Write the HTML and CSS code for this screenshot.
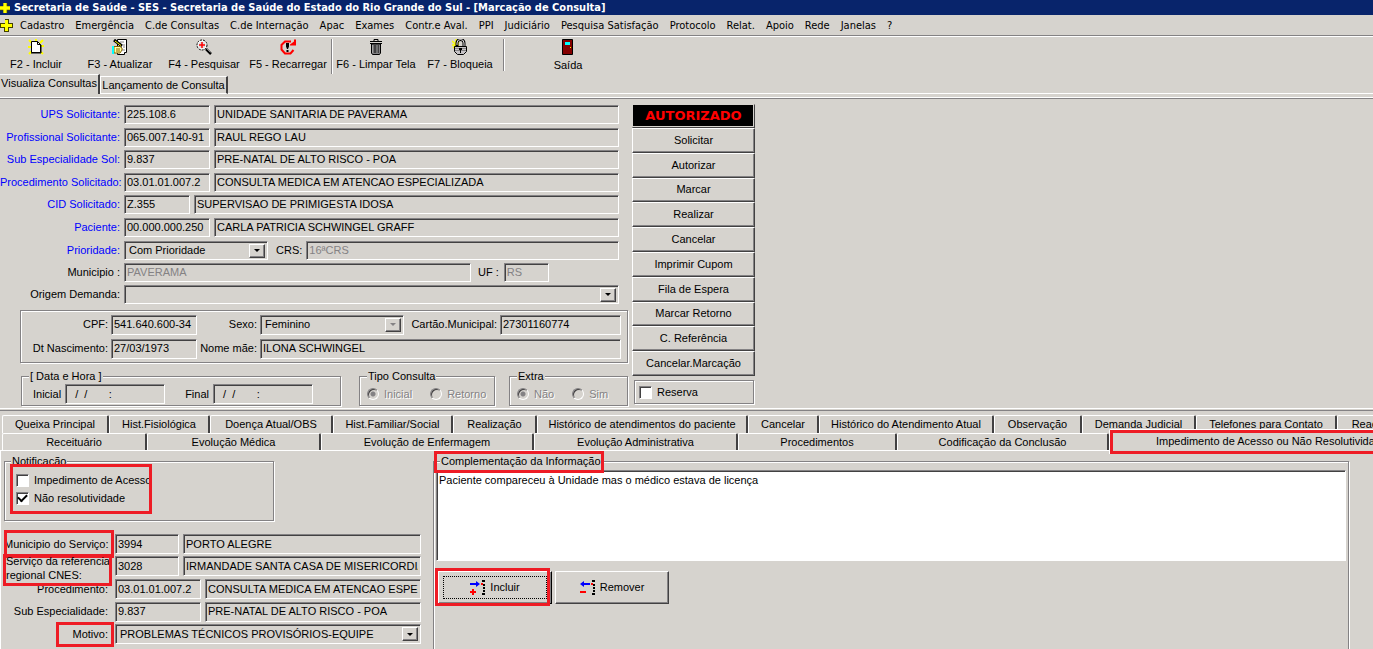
FILE: index.html
```html
<!DOCTYPE html>
<html lang="pt-BR">
<head>
<meta charset="utf-8">
<title>Secretaria de Saúde - SES - Marcação de Consulta</title>
<link rel="stylesheet" href="styles.css">
</head>
<body>
<header class="titlebar">
  <svg class="cross" viewBox="0 0 12 12"><path d="M4 0h5v4h3v5H9v3H4V9H0V4h4z" fill="#424100"/><path d="M4 0h4v4h4v4H8v4H4V8H0V4h4z" fill="#ffff00"/></svg>
  <h1>Secretaria de Saúde - SES - Secretaria de Saúde do Estado do Rio Grande do Sul - [Marcação de Consulta]</h1>
</header>
<nav class="menubar">
  <svg class="cross" viewBox="0 0 13 13"><path d="M5 0h4v4h4v5H9v4H4V9H0V4h5z" fill="#424100"/><path d="M5 1h3v4h4v3H8v4H5V8H1V5h4z" fill="#ffff00"/></svg>
  <a href="#">Cadastro</a><a href="#">Emergência</a><a href="#">C.de Consultas</a><a href="#">C.de Internação</a><a href="#">Apac</a><a href="#">Exames</a><a href="#">Contr.e Aval.</a><a href="#">PPI</a><a href="#">Judiciário</a><a href="#">Pesquisa Satisfação</a><a href="#">Protocolo</a><a href="#">Relat.</a><a href="#">Apoio</a><a href="#">Rede</a><a href="#">Janelas</a><a href="#">?</a>
</nav>
<div class="toolbar">
  <button class="tool first"><svg viewBox="0 0 16 16"><path d="M1 1l3 3M8 0v2M15 1l-3 3M0 8h3M13 7h3M1 15l3-3M15 15l-2-2" stroke="#ffff00" stroke-width="2"/><path d="M3.500 2.500h6l3 3v8h-9z" fill="#fff" stroke="#000"/><path d="M9.500 2.500v3h3M3 14h10V6" fill="none" stroke="#000"/></svg>F2 - Incluir</button>
  <button class="tool"><svg viewBox="0 0 16 16"><path d="M5.500.5h9v13h-2v2h-7z" fill="#fff" stroke="#000"/><path d="M8 3h4M11 6h2M11 8h2M10 11h3" stroke="#848284"/><path d="M2 1l8 6" stroke="#000" stroke-width="3"/><path d="M3 2l6 4.500" stroke="#ffff00"/><path d="M2 7.500h6l2 1.500v2l-2 3H2z" fill="#ffffa0" stroke="#846100"/><path d="M0 7h2v8H0z" fill="#00ffff"/><path d="M4 10h4M4 12h4" stroke="#846100"/></svg>F3 - Atualizar</button>
  <button class="tool"><svg viewBox="0 0 16 16"><circle cx="6" cy="6" r="5" fill="#fff" stroke="#000" stroke-dasharray="2 1"/><circle cx="6" cy="6" r="3.500" fill="#dedbde"/><path d="M6 3v6M3 6h6" stroke="#f00" stroke-width="1.500"/><path d="M10 10l5 5" stroke="#000" stroke-width="2.500"/><path d="M10.500 9.500l4 4" stroke="#848284"/></svg>F4 - Pesquisar</button>
  <button class="tool"><svg viewBox="0 0 16 16"><path d="M11 2.500H5L1.500 6v4.500l3.500 4h5.500l3-3.500" fill="none" stroke="#f00" stroke-width="2"/><path d="M10 6.500h6v-6h-2v2l-4 3z" fill="#f00"/><path d="M6 4h3v3.500L8 10H7L6 7.500zM6.500 11h2v2h-2z" fill="#000"/></svg>F5 - Recarregar</button>
  <span class="sep"></span>
  <button class="tool"><svg viewBox="0 0 16 16"><path d="M6 2V.5h4V2M2 2.500h12M2 4.500h12" fill="none" stroke="#000"/><path d="M3.500 5v9l1 1.500h7l1-1.500V5z" fill="#848284" stroke="#000"/><path d="M6 6v8M8 6v8M10 6v8" stroke="#000"/><path d="M5 6v8M9 6v8" stroke="#fff" stroke-width=".5"/></svg>F6 - Limpar Tela</button>
  <button class="tool"><svg viewBox="0 0 16 16"><path d="M4 0v9M0 2l7 6M0 6h7M1 9l6-6" stroke="#ffff00" stroke-width="1.500"/><path d="M5 7V4a3.500 3.500 0 0 1 7 0v4" fill="none" stroke="#000" stroke-width="3"/><path d="M5 6V4a3.500 3.500 0 0 1 7 0v4" fill="none" stroke="#dedbde"/><path d="M2.500 7.500h12v5l-3 3h-6l-3-3z" fill="#c6c3c6" stroke="#000"/><path d="M3 9.500h11M3 11.500h11" stroke="#848284"/><path d="M7 9h3v2H9v3H8v-3H7z" fill="#000"/></svg>F7 - Bloqueia</button>
  <span class="sep low"></span>
  <button class="tool exit"><svg viewBox="0 0 16 16"><path d="M2.500.5h10v15h-10z" fill="#840000" stroke="#000"/><path d="M5 3h5v3H5z" fill="#00ffff"/><path d="M10 8h1v1h-1z" fill="#ffff00"/></svg>Saída</button>
</div>
<div class="maintabs"><button class="on">Visualiza Consultas</button><button>Lançamento de Consulta</button><span></span></div>

<main class="upper">
  <form class="form">
    <div class="rows">
      <div class="row"><label class="lb blue" for="ups">UPS Solicitante:</label><input class="f code" id="ups" value="225.108.6"><input class="f grow" aria-label="Unidade" value="UNIDADE SANITARIA DE PAVERAMA"></div>
      <div class="row"><label class="lb blue" for="prof">Profissional Solicitante:</label><input class="f code" id="prof" value="065.007.140-91"><input class="f grow" aria-label="Nome do profissional" value="RAUL REGO LAU"></div>
      <div class="row"><label class="lb blue" for="sub">Sub Especialidade Sol:</label><input class="f code" id="sub" value="9.837"><input class="f grow" aria-label="Nome da especialidade" value="PRE-NATAL DE ALTO RISCO - POA"></div>
      <div class="row"><label class="lb blue" for="proc">Procedimento Solicitado:</label><input class="f code" id="proc" value="03.01.01.007.2"><input class="f grow" aria-label="Nome do procedimento" value="CONSULTA MEDICA EM ATENCAO ESPECIALIZADA"></div>
      <div class="row"><label class="lb blue" for="cid">CID Solicitado:</label><input class="f cid" id="cid" value="Z.355"><input class="f grow" aria-label="Nome do CID" value="SUPERVISAO DE PRIMIGESTA IDOSA"></div>
      <div class="row"><label class="lb blue" for="pac">Paciente:</label><input class="f code" id="pac" value="00.000.000.250"><input class="f grow" aria-label="Nome do paciente" value="CARLA PATRICIA SCHWINGEL GRAFF"></div>
      <div class="row"><label class="lb blue" for="prio">Prioridade:</label><span class="f combo prio"><select id="prio"><option>Com Prioridade</option></select><i></i></span><label class="crs" for="crs">CRS:</label><input class="f grow" id="crs" value="16ªCRS" disabled></div>
      <div class="row"><label class="lb" for="mun">Municipio :</label><input class="f mun" id="mun" value="PAVERAMA" disabled><label class="ufl" for="uf">UF :</label><input class="f uf" id="uf" value="RS" disabled></div>
      <div class="row"><label class="lb" for="orig">Origem Demanda:</label><span class="f combo grow"><select id="orig"><option></option></select><i></i></span></div>
    </div>
    <div class="group person">
      <label for="cpf">CPF:</label><input class="f" id="cpf" value="541.640.600-34"><label for="sexo">Sexo:</label><span class="f combo"><select id="sexo" disabled><option>Feminino</option></select><i class="off"></i></span><label for="cart">Cartão.Municipal:</label><input class="f" id="cart" value="27301160774">
      <label for="nasc">Dt Nascimento:</label><input class="f" id="nasc" value="27/03/1973"><label for="mae">Nome mãe:</label><input class="f wide" id="mae" value="ILONA SCHWINGEL">
    </div>
    <div class="sets">
      <fieldset class="dates"><legend>[ Data e Hora ]</legend><label for="ini">Inicial</label><input class="f" id="ini" value=" /  /       :"><label class="fin" for="fim">Final</label><input class="f" id="fim" value=" /  /       :"></fieldset>
      <fieldset class="tipo"><legend>Tipo Consulta</legend><label><input type="radio" name="t" checked disabled>Inicial</label><label><input type="radio" name="t" disabled>Retorno</label></fieldset>
      <fieldset class="extra"><legend>Extra</legend><label><input type="radio" name="e" checked disabled>Não</label><label><input type="radio" name="e" disabled>Sim</label></fieldset>
    </div>
  </form>
  <aside class="actions">
    <strong class="status">AUTORIZADO</strong>
    <div class="stack"><button class="btn">Solicitar</button><button class="btn">Autorizar</button><button class="btn">Marcar</button><button class="btn">Realizar</button><button class="btn">Cancelar</button><button class="btn">Imprimir Cupom</button><button class="btn">Fila de Espera</button><button class="btn">Marcar Retorno</button><button class="btn">C. Referência</button><button class="btn">Cancelar.Marcação</button></div>
    <label class="group reserva"><input type="checkbox">Reserva</label>
  </aside>
</main>

<section class="lower">
  <div class="tabs one"><button>Queixa Principal</button><button>Hist.Fisiológica</button><button>Doença Atual/OBS</button><button>Hist.Familiar/Social</button><button>Realização</button><button>Histórico de atendimentos do paciente</button><button>Cancelar</button><button>Histórico do Atendimento Atual</button><button>Observação</button><button>Demanda Judicial</button><button>Telefones para Contato</button><button>Reações Adversas</button></div>
  <div class="tabs two"><button>Receituário</button><button>Evolução Médica</button><button>Evolução de Enfermagem</button><button>Evolução Administrativa</button><button>Procedimentos</button><button>Codificação da Conclusão</button><button class="on mark">Impedimento de Acesso ou Não Resolutividade</button></div>
  <div class="page">
    <form class="left">
      <fieldset class="notif"><legend>Notificação</legend><div class="mark checks"><label><input type="checkbox">Impedimento de Acesso</label><label><input type="checkbox" checked>Não resolutividade</label></div></fieldset>
      <div class="serv">
        <div class="row"><label class="lb mark m1" for="ms">Municipio do Serviço:</label><input class="f short" id="ms" value="3994"><input class="f grow" aria-label="Nome do município" value="PORTO ALEGRE"></div>
        <div class="row"><label class="lb mark m2" for="sr">Serviço da referencia<br>regional CNES:</label><input class="f short" id="sr" value="3028"><input class="f grow" aria-label="Nome do serviço" value="IRMANDADE SANTA CASA DE MISERICORDIA"></div>
        <div class="row"><label class="lb" for="pr">Procedimento:</label><input class="f code" id="pr" value="03.01.01.007.2"><input class="f grow" aria-label="Nome do procedimento" value="CONSULTA MEDICA EM ATENCAO ESPECIALIZADA"></div>
        <div class="row"><label class="lb" for="se">Sub Especialidade:</label><input class="f code" id="se" value="9.837"><input class="f grow" aria-label="Nome da subespecialidade" value="PRE-NATAL DE ALTO RISCO - POA"></div>
        <div class="row"><label class="lb mark m3" for="mo">Motivo:</label><span class="f combo grow"><select id="mo"><option>PROBLEMAS TÉCNICOS PROVISÓRIOS-EQUIPE</option></select><i></i></span></div>
      </div>
    </form>
    <fieldset class="info">
      <legend class="mark">Complementação da Informação</legend>
      <textarea aria-label="Complementação da Informação">Paciente compareceu à Unidade mas o médico estava de licença</textarea>
      <div class="cmds">
        <button class="btn big mark focus"><svg viewBox="0 0 16 16"><path d="M0 3h6V1l4 3-4 3V5H0z" fill="#00f"/><path d="M2 9h2v2h2v2H4v2H2v-2H0v-2h2z" fill="#f00"/><path d="M11 3h2v2h-2z" fill="#f00"/><path d="M12 0h3v2h-3zM13 4h2v2h-2zM13 7h2v2h-2zM13 10h2v2h-2zM12 13h3v2h-3z"/></svg>Incluir</button>
        <button class="btn big"><svg viewBox="0 0 16 16"><path d="M10 3H4V1L0 4l4 3V5h6z" fill="#00f"/><path d="M0 11h6v2H0z" fill="#f00"/><path d="M11 3h2v2h-2z" fill="#f00"/><path d="M12 0h3v2h-3zM13 4h2v2h-2zM13 7h2v2h-2zM13 10h2v2h-2zM12 13h3v2h-3z"/></svg>Remover</button>
      </div>
    </fieldset>
  </div>
</section>
</body>
</html>
```
FILE: styles.css
```css
:root {
  --face: #d6d3ce;
  --shade: #848284;
  --dark: #424142;
  --mark: #ee1c25;
}
* { box-sizing: border-box; }
body {
  margin: 0;
  min-height: 100vh;
  display: flex;
  flex-direction: column;
  background: var(--face);
  color: #000;
  font: 11px/13px "Liberation Sans", Arial, sans-serif;
  overflow: hidden;
}
button, input, select, textarea { font: inherit; color: inherit; margin: 0; }
button { background: var(--face); border: 0; padding: 0; }
label { white-space: nowrap; }

/* title and menu */
.titlebar {
  height: 15px;
  display: flex;
  align-items: center;
  gap: 4px;
  background: #08246b;
  color: #fff;
}
.titlebar h1 { margin: 0; font: bold 11px/13px "DejaVu Sans Condensed", Tahoma, sans-serif; white-space: nowrap; }
.cross { width: 10px; height: 12px; flex: none; }
.menubar {
  height: 21px;
  display: flex;
  align-items: center;
  gap: 11px;
  border-bottom: 1px solid var(--shade);
  font: 11px/13px "DejaVu Sans Condensed", Tahoma, sans-serif;
}
.menubar .cross { width: 13px; height: 13px; margin-right: -4px; }
.menubar a { color: inherit; text-decoration: none; white-space: nowrap; }

/* toolbar */
.toolbar { height: 38px; display: flex; border-top: 1px solid #fff; padding-top: 2px; }
.tool { width: 84px; display: flex; flex-direction: column; align-items: center; gap: 3px; white-space: nowrap; }
.tool svg { width: 16px; height: 16px; flex: none; }
.tool.first { width: 78px; padding-right: 6px; }
.tool.exit { width: 124px; gap: 4px; }
.sep { width: 2px; margin: 0 1px; flex: none; background: linear-gradient(90deg, var(--shade) 50%, #fff 50%); }
.sep.low { height: 32px; }

.maintabs { display: flex; align-items: flex-end; height: 20px; }
.maintabs button {
  height: 18px;
  width: 128px;
  border-top: 1px solid #fff;
  border-left: 1px solid #fff;
  border-right: 2px solid var(--dark);
  border-bottom: 1px solid #fff;
  white-space: nowrap;
}
.maintabs .on { width: 100px; height: 20px; border-left: 0; border-bottom: 0; padding-bottom: 2px; }
.maintabs span { flex: 1; border-bottom: 1px solid #fff; }

/* sunken fields */
.f {
  min-width: 0;
  width: 100%;
  height: 20px;
  padding: 0 2px 1px;
  background: var(--face);
  border: 1px solid;
  border-color: var(--shade) #fff #fff var(--shade);
  border-radius: 0;
  box-shadow: inset 1px 1px 0 var(--dark);
  outline: 0;
}
.f:disabled { color: var(--shade); }
.combo { display: flex; align-items: center; padding: 2px; }
.combo select {
  appearance: none;
  flex: 1;
  min-width: 0;
  border: 0;
  padding: 0 2px;
  background: transparent;
  opacity: 1;
  color: #000;
}
.combo i {
  width: 16px;
  height: 14px;
  flex: none;
  display: grid;
  place-items: center;
  border: 1px solid;
  border-color: #fff var(--dark) var(--dark) #fff;
  box-shadow: inset -1px -1px 0 var(--shade);
  pointer-events: none;
}
.combo i::before { content: ""; border: 3px solid transparent; border-top-color: #000; border-bottom: 0; }
.combo .off::before { border-top-color: var(--shade); }

/* upper panel */
.upper {
  display: grid;
  grid-template-columns: 628px 123px;
  column-gap: 4px;
  margin-top: 3px;
  padding: 6px 0 2px;
  border-top: 1px solid #fff;
  border-bottom: 1px solid #fff;
  box-shadow: inset 0 1px 0 var(--shade);
  height: 312px;
}
.row { display: flex; align-items: center; gap: 4px; }
.lb { width: 120px; flex: none; text-align: right; }
.blue { color: #0000ff; }
.rows {
  padding-right: 9px;
  display: grid;
  grid-template-rows: 20px 20px 19px 20px 19px 21px 19px 19px 19px;
  row-gap: 3px;
  height: 206px;
  align-content: start;
}
.rows .f { height: 19px; }
.code { width: 86px; flex: none; }
.cid { width: 66px; flex: none; }
.grow { flex: 1; }
.prio { width: 144px; flex: none; }
.crs { padding: 0 0 0 4px; }
.mun { width: 347px; flex: none; }
.ufl { padding: 0 1px 0 3px; }
.uf { width: 45px; flex: none; }
.group {
  border: 1px solid var(--shade);
  box-shadow: 1px 1px 0 #fff, inset 1px 1px 0 #fff;
}
.person {
  margin-left: 20px;
  height: 53px;
  padding-top: 3px;
  display: grid;
  grid-template-columns: 87px 86px 57px 144px 90px 121px;
  grid-auto-rows: 21px;
  row-gap: 3px;
  column-gap: 3px;
  align-items: center;
}
.person label { text-align: right; }
.person .wide { grid-column: 4 / -1; }
.sets { display: flex; margin: 7px 0 0 21px; }
fieldset {
  margin: 0;
  min-width: 0;
  padding: 0;
  border: 1px solid var(--shade);
  box-shadow: 1px 1px 0 #fff, inset 1px 1px 0 #fff;
}
legend { padding: 0 1px; margin-left: 7px; background: var(--face); }
.sets fieldset { height: 36px; display: flex; align-items: center; }
.dates { width: 320px; }
.dates .f { width: 100px; margin-left: 4px; padding-left: 6px; }
.dates .fin { margin-left: 20px; }
.tipo { width: 136px; margin-left: 18px; }
.extra { width: 119px; margin-left: 14px; }
.dates legend + label { margin-left: 11px; }
.tipo legend + label, .extra legend + label { margin-left: 7px; }
.tipo label, .extra label { display: flex; align-items: center; gap: 5px; margin-right: 18px; color: var(--shade); text-shadow: 1px 1px 0 #fff; }
input[type="radio"] {
  appearance: none;
  width: 12px;
  height: 12px;
  border: 1px solid;
  border-color: var(--shade) #fff #fff var(--shade);
  border-radius: 50%;
  box-shadow: inset 1px 1px 0 var(--dark);
}
input[type="radio"]:checked { background: radial-gradient(circle, var(--shade) 2px, transparent 3px); }
input[type="checkbox"] {
  appearance: none;
  width: 13px;
  height: 13px;
  display: grid;
  place-items: center;
  background: #fff;
  border: 1px solid;
  border-color: var(--shade) #fff #fff var(--shade);
  box-shadow: inset 1px 1px 0 var(--dark);
}
input[type="checkbox"]:checked::before {
  content: "";
  width: 7px;
  height: 4px;
  border: 2px solid #000;
  border-width: 0 0 2px 2px;
  rotate: -45deg;
  margin-bottom: 2px;
}

.actions { display: flex; flex-direction: column; }
.status {
  height: 24px;
  display: grid;
  place-items: center;
  background: #000;
  color: #f00;
  border: 1px solid;
  border-color: var(--face) var(--dark) var(--dark) var(--face);
  box-shadow: inset -1px -1px 0 var(--face);
  font: bold 13px/16px "DejaVu Sans", Verdana, sans-serif;
}
.stack { display: grid; grid-auto-rows: 1fr; height: 248px; }
.btn {
  border: 1px solid;
  border-color: #fff var(--dark) var(--dark) #fff;
  box-shadow: inset -1px -1px 0 var(--shade);
}
.reserva { margin: 4px 1px 0 2px; height: 24px; display: flex; align-items: center; gap: 5px; padding-left: 4px; }

/* lower tabs */
.lower { flex: 1; display: flex; flex-direction: column; margin-top: 1px; border-top: 1px solid var(--shade); padding-top: 4px; }
.tabs { display: grid; grid-template-rows: 100%; padding-left: 2px; flex: none; }
.tabs.one { height: 18px; overflow: hidden; grid-template-columns: 107px 101px 123px 120px 84px 211px 71px 175px 88px 114px 141px 122px; }
.tabs.two { height: 17px; grid-template-columns: 145px 174px 213px 204px 159px 212px 326px; }
.tabs button {
  border-top: 1px solid #fff;
  border-left: 1px solid #fff;
  border-right: 2px solid var(--dark);
  border-radius: 2px 2px 0 0;
  white-space: nowrap;
}
.tabs .on { height: 25px; margin-top: -4px; padding-bottom: 2px; }
.page {
  flex: 1;
  display: grid;
  grid-template-columns: 432px minmax(0, 916px);
  border-top: 1px solid #fff;
  border-left: 1px solid #fff;
}
.left { padding: 4px 12px 0 3px; }
.notif { width: 270px; height: 66px; }
.notif legend { margin-left: 6px; line-height: 12px; }
.checks { width: 142px; height: 50px; margin: -3px 0 0 5px; display: grid; align-content: center; gap: 5px; padding-left: 6px; }
.checks label { display: flex; align-items: center; gap: 5px; }
.serv { display: grid; grid-template-rows: 20px 22px 22px 21px 22px; row-gap: 1px; margin-top: 13px; }
.serv .row { gap: 4px; }
.serv .f { height: 20px; }
.serv .lb { width: 107px; padding-right: 3px; }
.short { width: 64px; flex: none; }
.serv .m2 { text-align: left; line-height: 14px; padding: 0 0 0 2px; margin-top: 4px; }

/* red highlight frames */
.mark { position: relative; }
.mark::after { content: ""; position: absolute; inset: 0; border: 3px solid var(--mark); pointer-events: none; }
.serv .m1::after { inset: -8px -3px -7px 0; }
.serv .m2::after { inset: 0 -1px -4px -1px; }
.serv .m3::after { inset: -6px -3px -6px 52px; }
.info legend::after { inset: -4px -2px -6px -6px; }

.info { border-bottom: 0; padding: 0 2px; margin-top: 4px; }
.info legend { margin-left: 4px; line-height: 12px; }
.info textarea {
  display: block;
  width: 100%;
  height: 91px;
  margin-top: 3px;
  padding: 3px 2px;
  resize: none;
  background: #fff;
  border: 1px solid;
  border-color: var(--shade) #fff #fff var(--shade);
  border-radius: 0;
  box-shadow: inset 1px 1px 0 var(--dark);
}
.cmds { display: flex; gap: 3px; margin: 10px 0 0 2px; }
.big { width: 114px; height: 33px; display: flex; align-items: center; justify-content: center; gap: 4px; }
.big svg { width: 16px; height: 16px; }
.focus { border-color: #fff #000 #000 #fff; outline: 1px dotted #000; outline-offset: -6px; }
.focus::after { inset: -4px 1px -3px -4px; }
```
